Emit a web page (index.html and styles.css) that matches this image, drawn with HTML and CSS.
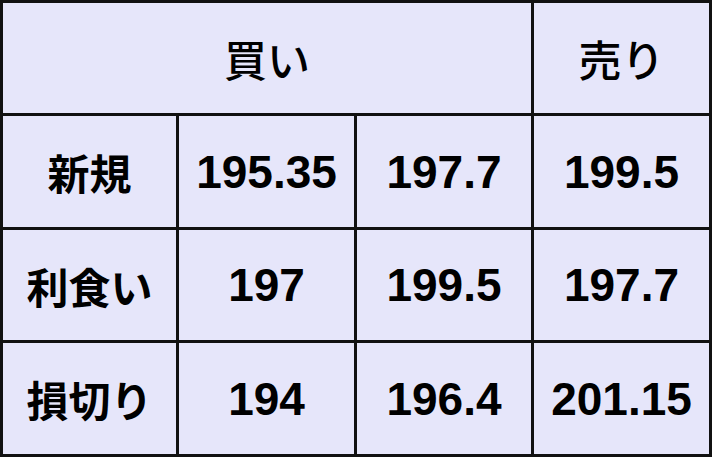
FILE: index.html
```html
<!DOCTYPE html>
<html lang="ja">
<head>
<meta charset="utf-8">
<link rel="stylesheet" href="styles.css">
</head>
<body>
<div class="table">
  <div class="cell head span3">買い</div>
  <div class="cell head">売り</div>
  <div class="cell label">新規</div>
  <div class="cell num">195.35</div>
  <div class="cell num">197.7</div>
  <div class="cell num">199.5</div>
  <div class="cell label">利食い</div>
  <div class="cell num">197</div>
  <div class="cell num">199.5</div>
  <div class="cell num">197.7</div>
  <div class="cell label">損切り</div>
  <div class="cell num">194</div>
  <div class="cell num">196.4</div>
  <div class="cell num">201.15</div>
</div>
</body>
</html>
```
FILE: styles.css
```css
html, body {
  margin: 0;
  padding: 0;
  background: #e6e6fa;
}
.table {
  width: 712px;
  height: 457px;
  box-sizing: border-box;
  display: grid;
  grid-template-columns: 173px 175px 174px 175px;
  grid-template-rows: 110px 111px 110px 111px;
  gap: 3px;
  padding: 3px;
  background: #111;
}
.cell {
  background: #e6e6fa;
  display: flex;
  align-items: center;
  justify-content: center;
  color: #000;
}
.span3 {
  grid-column: span 3;
}
.head {
  font-family: "Noto Sans CJK JP", sans-serif;
  font-size: 43px;
  font-weight: 500;
}
.label {
  font-family: "Noto Sans CJK JP", sans-serif;
  font-size: 42px;
  font-weight: 700;
}
.num {
  font-family: "Liberation Sans", Arial, sans-serif;
  font-size: 46px;
  font-weight: 700;
}
```
